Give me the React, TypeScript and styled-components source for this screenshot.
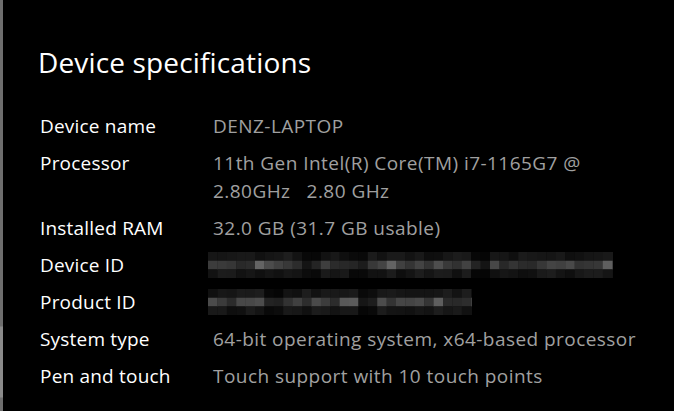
import React from 'react';
import styled, { createGlobalStyle } from 'styled-components';

const Global = createGlobalStyle`
  html, body { margin: 0; padding: 0; background: #000; }
  body { font-family: "Open Sans", "Noto Sans", sans-serif; }
`;

const Page = styled.div`
  display: flex;
  width: 674px;
  height: 411px;
  background: #000;
  overflow: hidden;
`;

const EdgeStrip = styled.div`
  width: 3px;
  flex: none;
  background: linear-gradient(
    to bottom,
    #6e6e6e 0px,
    #6e6e6e 326px,
    #8a8a8a 327px,
    #8a8a8a 397px,
    #6e6e6e 398px
  );
`;

const Content = styled.div`
  flex: 1;
  padding: 42px 0 0 35px;
  display: flex;
  flex-direction: column;
`;

const Title = styled.h1`
  margin: 0 0 30px 0;
  font-family: "Open Sans", "Noto Sans", sans-serif;
  font-weight: 400;
  font-size: 28px;
  line-height: 40px;
  color: #fff;
  letter-spacing: 0.15px;
`;

const SpecList = styled.div`
  display: flex;
  flex-direction: column;
  gap: 9px;
  padding-left: 2px;
`;

const Row = styled.div`
  display: grid;
  grid-template-columns: 173px 1fr;
  align-items: start;
`;

const Label = styled.div`
  font-size: 19px;
  line-height: 28px;
  letter-spacing: 0.2px;
  color: #fff;
  white-space: nowrap;
`;

const Value = styled.div`
  font-size: 19px;
  line-height: 28px;
  letter-spacing: 0.45px;
  color: #a0a0a0;
  white-space: pre;
`;

const Mosaic = styled.svg`
  display: block;
  margin-top: 1px;
  margin-left: -5px;
`;

function seeded(seed: number) {
  let s = seed;
  return () => {
    s = (s * 9301 + 49297) % 233280;
    return s / 233280;
  };
}

const Pixelated: React.FC<{ width: number; gaps: number[]; seed: number }> = ({ width, gaps, seed }) => {
  const rnd = seeded(seed);
  const bw = 9.4;
  const cols = Math.ceil(width / bw);
  const rects: React.ReactNode[] = [];
  for (let c = 0; c < cols; c++) {
    const x = c * bw;
    const inGap = gaps.some((g) => x >= g && x < g + bw * 1.5);
    for (let r = 0; r < 3; r++) {
      let v: number;
      if (r === 1) {
        v = inGap ? 18 + rnd() * 20 : 38 + rnd() * 40;
        if (!inGap && rnd() > 0.85) v = 85 + rnd() * 15;
      } else {
        v = inGap ? 5 + rnd() * 8 : 14 + rnd() * 16;
      }
      const g = Math.round(v);
      rects.push(
        <rect key={`${c}-${r}`} x={x} y={r * 8.7} width={bw + 0.3} height={8.9} fill={`rgb(${g},${g},${g})`} />
      );
    }
  }
  return (
    <Mosaic width={width} height={26} viewBox={`0 0 ${width} 26`}>
      {rects}
    </Mosaic>
  );
};

export default function App() {
  return (
    <Page>
      <Global />
      <EdgeStrip />
      <Content>
        <Title>Device specifications</Title>
        <SpecList>
          <Row>
            <Label>Device name</Label>
            <Value>DENZ-LAPTOP</Value>
          </Row>
          <Row>
            <Label>Processor</Label>
            <Value>{'11th Gen Intel(R) Core(TM) i7-1165G7 @\n2.80GHz   2.80 GHz'}</Value>
          </Row>
          <Row>
            <Label>Installed RAM</Label>
            <Value>32.0 GB (31.7 GB usable)</Value>
          </Row>
          <Row>
            <Label>Device ID</Label>
            <Value>
              <Pixelated width={405} gaps={[94, 140, 259]} seed={7} />
            </Value>
          </Row>
          <Row>
            <Label>Product ID</Label>
            <Value>
              <Pixelated width={264} gaps={[56, 150]} seed={23} />
            </Value>
          </Row>
          <Row>
            <Label>System type</Label>
            <Value>64-bit operating system, x64-based processor</Value>
          </Row>
          <Row>
            <Label>Pen and touch</Label>
            <Value>Touch support with 10 touch points</Value>
          </Row>
        </SpecList>
      </Content>
    </Page>
  );
}
